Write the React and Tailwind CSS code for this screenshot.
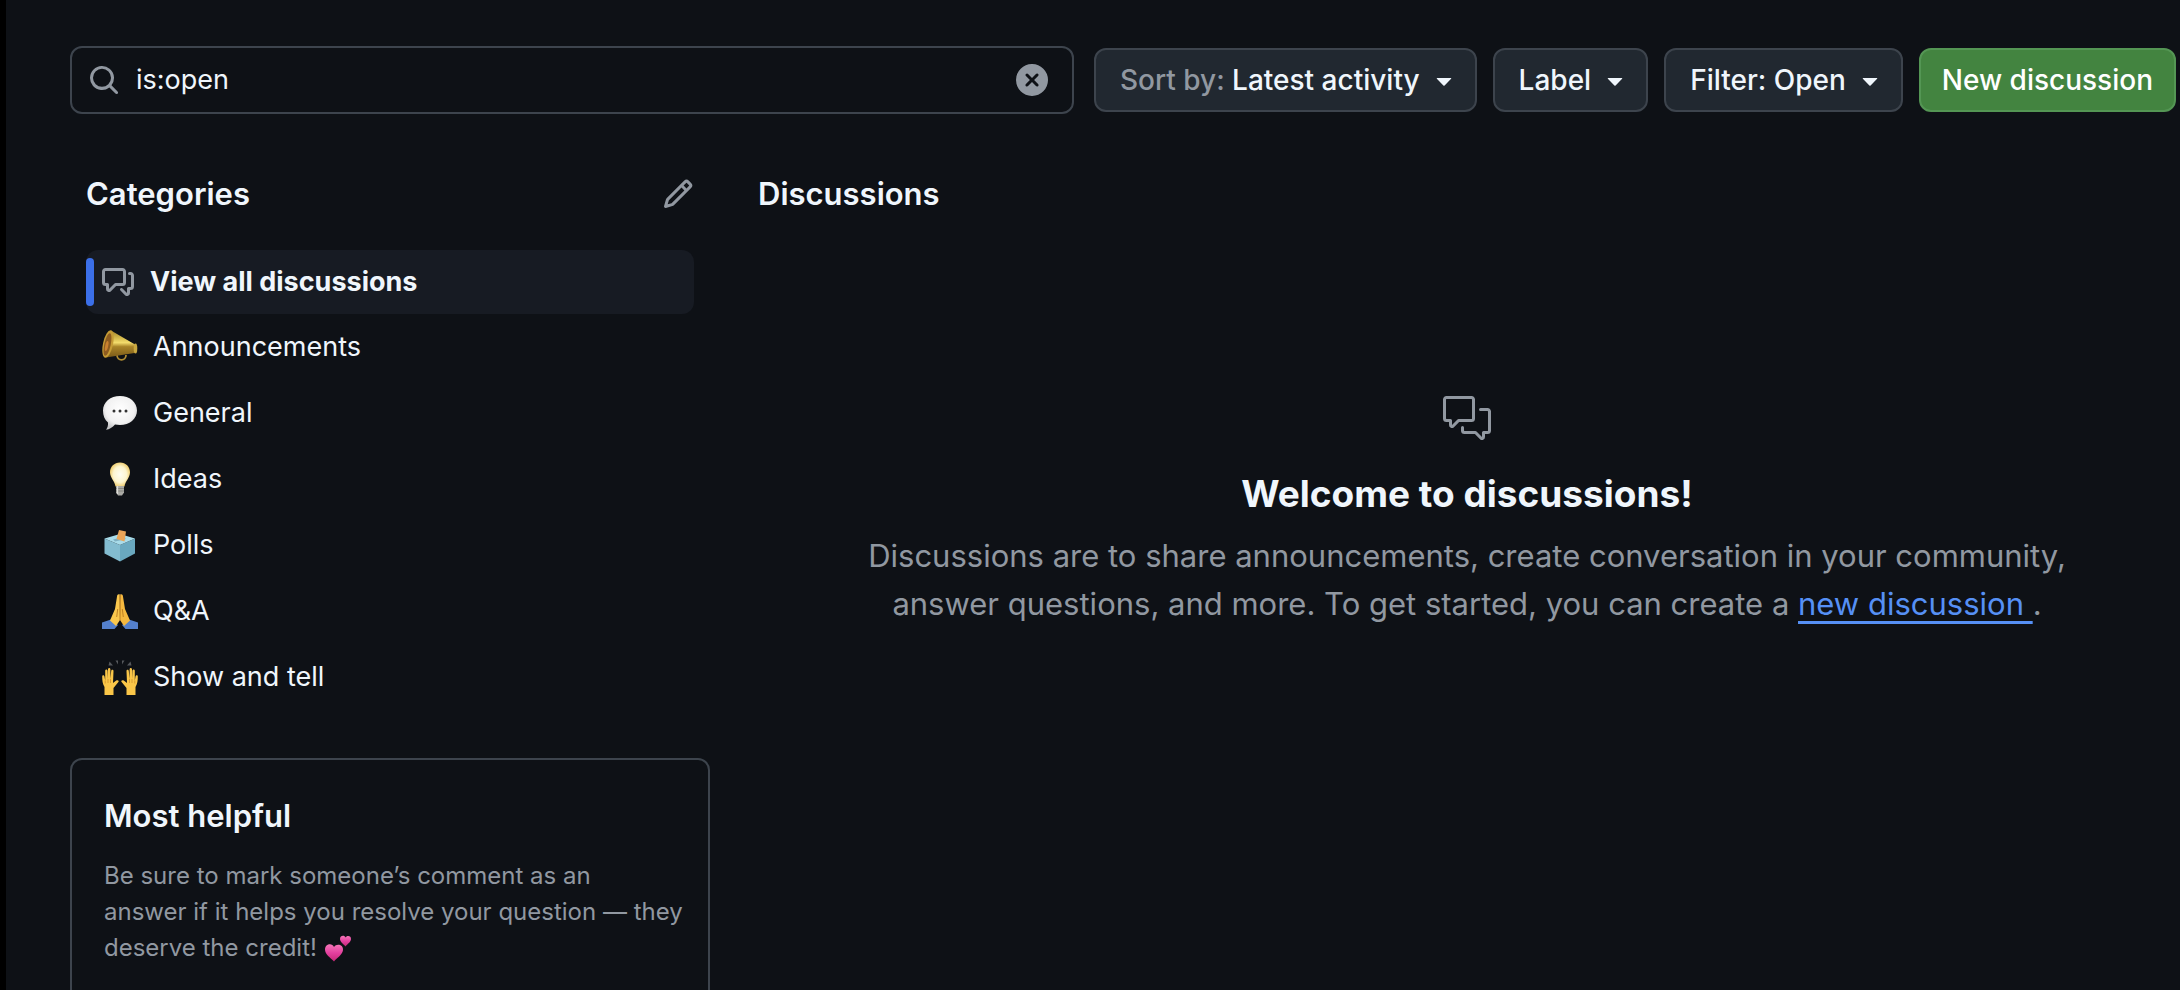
import { GoCommentDiscussion } from "react-icons/go";

const categories = [
  { name: "Announcements", Emoji: Megaphone },
  { name: "General", Emoji: Speech },
  { name: "Ideas", Emoji: Bulb },
  { name: "Polls", Emoji: Ballot },
  { name: "Q&A", Emoji: Pray },
  { name: "Show and tell", Emoji: RaisedHands },
];

const iconPaths = {
  search:
    "M10.68 11.74a6 6 0 0 1-7.922-8.982 6 6 0 0 1 8.982 7.922l3.04 3.04a.749.749 0 0 1-.326 1.275.749.749 0 0 1-.734-.215ZM11.5 7a4.499 4.499 0 1 0-8.997 0A4.499 4.499 0 0 0 11.5 7Z",
  pencil:
    "M11.013 1.427a1.75 1.75 0 0 1 2.474 0l1.086 1.086a1.75 1.75 0 0 1 0 2.474l-8.61 8.61c-.21.21-.47.364-.756.445l-3.251.93a.75.75 0 0 1-.927-.928l.929-3.25c.081-.286.235-.547.445-.758l8.61-8.61Zm.176 4.823L9.75 4.81l-6.286 6.287a.253.253 0 0 0-.064.108l-.558 1.953 1.953-.558a.253.253 0 0 0 .108-.064Zm1.238-3.763a.25.25 0 0 0-.354 0L10.811 3.75l1.439 1.44 1.263-1.263a.25.25 0 0 0 0-.354Z",
  discussion:
    "M1.75 1h8.5c.966 0 1.75.784 1.75 1.75v5.5A1.75 1.75 0 0 1 10.25 10H7.061l-2.574 2.573A1.458 1.458 0 0 1 2 11.543V10h-.25A1.75 1.75 0 0 1 0 8.25v-5.5C0 1.784.784 1 1.75 1ZM1.5 2.75v5.5c0 .138.112.25.25.25h1a.75.75 0 0 1 .75.75v2.19l2.72-2.72a.749.749 0 0 1 .53-.22h3.5a.25.25 0 0 0 .25-.25v-5.5a.25.25 0 0 0-.25-.25h-8.5a.25.25 0 0 0-.25.25Zm13 2a.25.25 0 0 0-.25-.25h-.5a.75.75 0 0 1 0-1.5h.5c.966 0 1.75.784 1.75 1.75v5.5A1.75 1.75 0 0 1 14.25 12H14v1.543a1.458 1.458 0 0 1-2.487 1.03L9.22 12.28a.749.749 0 0 1 .326-1.275.749.749 0 0 1 .734.215l2.22 2.22v-2.19a.75.75 0 0 1 .75-.75h1a.25.25 0 0 0 .25-.25Z",
  clear:
    "M2.343 13.657A8 8 0 1 1 13.658 2.343 8 8 0 0 1 2.343 13.657ZM6.03 4.97a.751.751 0 0 0-1.042.018.751.751 0 0 0-.018 1.042L6.94 8 4.97 9.97a.749.749 0 0 0 .326 1.275.749.749 0 0 0 .734-.215L8 9.06l1.97 1.97a.749.749 0 0 0 1.275-.326.749.749 0 0 0-.215-.734L9.06 8l1.97-1.97a.749.749 0 0 0-.326-1.275.749.749 0 0 0-.734.215L8 6.94Z",
  caret:
    "m4.427 7.427 3.396 3.396a.25.25 0 0 0 .354 0l3.396-3.396A.25.25 0 0 0 11.396 7H4.604a.25.25 0 0 0-.177.427Z",
};

function Icon({ name, className = "" }) {
  return (
    <svg viewBox="0 0 16 16" fill="currentColor" className={"size-8 shrink-0 " + className} aria-hidden="true">
      <path d={iconPaths[name]} />
    </svg>
  );
}

function Megaphone() {
  return (
    <svg viewBox="0 0 36 36" className="size-9 shrink-0" aria-hidden="true">
      <defs>
        <linearGradient id="mega" x1="0" y1="0" x2="0" y2="1">
          <stop offset="0" stopColor="#a5842a" />
          <stop offset=".3" stopColor="#d9bf50" />
          <stop offset=".45" stopColor="#f3dc6c" />
          <stop offset=".6" stopColor="#a98428" />
          <stop offset="1" stopColor="#7a5a18" />
        </linearGradient>
      </defs>
      <path d="M15 26c0 6.500 9 6.500 9 0" fill="none" stroke="#b08d33" strokeWidth="1.800" />
      <path d="M9 1.500 33 15.500c2.500 1.500 2 8-.500 8.500L4 28.500z" fill="url(#mega)" />
      <ellipse cx="6" cy="15" rx="5" ry="14" transform="rotate(12 6 15)" fill="#c59b35" />
      <ellipse cx="5.500" cy="15.500" rx="3.200" ry="11.500" transform="rotate(12 5.500 15.500)" fill="#8d5c20" />
      <ellipse cx="4.700" cy="17" rx="1.500" ry="5" transform="rotate(12 4.700 17)" fill="#c9812f" />
      <ellipse cx="33.500" cy="19.500" rx="1.800" ry="5" fill="#c9a840" />
    </svg>
  );
}

function Speech() {
  return (
    <svg viewBox="0 0 36 36" className="size-9 shrink-0" aria-hidden="true">
      <defs>
        <radialGradient id="speech" cx=".5" cy=".4" r=".6">
          <stop offset="0" stopColor="#fff" />
          <stop offset=".7" stopColor="#f1f1f1" />
          <stop offset="1" stopColor="#c4c4c6" />
        </radialGradient>
      </defs>
      <path d="M18 1c9.500 0 17 6 17 14.500S27.500 30 18 30c-2 0-3.500-.200-5-.500-2.500 3-5.500 4.800-9 5.300 1.500-2 2.300-4.500 2-7.300C2.700 25 1 20.500 1 15.500 1 7 8.500 1 18 1z" fill="url(#speech)" />
      <g fill="#333"><circle cx="12" cy="16" r="1.500" /><circle cx="18" cy="16" r="1.500" /><circle cx="24" cy="16" r="1.500" /></g>
    </svg>
  );
}

function Bulb() {
  return (
    <svg viewBox="0 0 36 36" className="size-9 shrink-0" aria-hidden="true">
      <defs>
        <radialGradient id="bulb" cx=".5" cy=".5" r=".55">
          <stop offset="0" stopColor="#fffef2" />
          <stop offset=".6" stopColor="#fdf5cf" />
          <stop offset="1" stopColor="#ecc65e" />
        </radialGradient>
      </defs>
      <path d="M18 1.500c5.800 0 10 4.300 10 9.800 0 5.700-4.800 8.700-5.500 14.200h-9C12.800 20 8 17 8 11.300 8 5.800 12.200 1.500 18 1.500z" fill="url(#bulb)" />
      <path d="M14 25h8v6.500L20 34.500h-4l-2-3z" fill="#a9a9a4" />
      <path d="M14 27.500h8M14 30h8" stroke="#85857f" strokeWidth="1" />
      <path d="M15.500 25v8" stroke="#dcdcd8" strokeWidth="1.300" />
    </svg>
  );
}

function Ballot() {
  return (
    <svg viewBox="0 0 36 36" className="size-9 shrink-0" aria-hidden="true">
      <path d="M2.500 11.500 18 18v16.500L2.500 26.500z" fill="#83bcd0" />
      <path d="M33 11.500 18 18v16.500l15-8z" fill="#6aa8bf" />
      <path d="M2.500 11.500 18 7l15 4.500L18 18z" fill="#a9dcea" />
      <path d="m11 12.500 11-2.500 2 2-11 2.500z" fill="#7fb0c2" />
      <path d="m17 3 7 1.500-1.500 10-8-2.500z" fill="#e9a458" />
    </svg>
  );
}

function Pray() {
  return (
    <svg viewBox="0 0 36 36" className="size-9 shrink-0" aria-hidden="true">
      <path d="M0 29.500 9 26.500l7 5.500-3.500 4H0zM36 29.500l-9-3-7 5.500 3.500 4H36z" fill="#5480cc" />
      <path d="M17.800 1.500c-1.500-.800-2.500 0-2.700 1.500L13 16 8 27.500l6 5.500 4-6z" fill="#fbc84d" />
      <path d="M18.200 1.500c1.500-.800 2.500 0 2.700 1.500L23 16l5 11.500-6 5.500-4-6z" fill="#f6b93f" />
      <path d="M18 2v26M15.700 16l-1 8M20.300 16l1 8" fill="none" stroke="#ba7b1f" strokeWidth=".900" />
    </svg>
  );
}

function Hand() {
  return (
    <>
      <path d="M2.500 36v-8C.500 25 .200 21 .200 17.500c0-1.800 2-1.800 2.300 0l.700 4V12c0-2 2.200-2 2.400 0l.400 8V10.500c0-2 2.400-2 2.400 0V20l.800-8c.200-1.800 2.400-1.600 2.300.200L11 24l3.200-2.500c1.800-1 3.400.300 2 1.800L11.500 29v7z" fill="#fac648" />
      <path d="M3.200 21.500v3M6 20v4M8.500 20v4" stroke="#c98a28" strokeWidth=".700" />
    </>
  );
}

function RaisedHands() {
  return (
    <svg viewBox="0 0 36 36" className="size-9 shrink-0" aria-hidden="true">
      <Hand />
      <g transform="matrix(-1 0 0 1 36 0)"><Hand /></g>
      <path d="m7.500 2.500 3.500 4-4.500 0zM13.500 1.500l2.500 0v4zM22.500 1.500 20 1.500v4zM28.500 2.500l-3.500 4 4.500 0z" fill="#55585c" />
    </svg>
  );
}

function Hearts() {
  return (
    <svg viewBox="0 0 28 28" className="inline-block size-7 align-text-bottom" role="img" aria-label="two hearts">
      <defs>
        <linearGradient id="hearts" x1="0" y1="0" x2="0" y2="1">
          <stop offset="0" stopColor="#f576b8" />
          <stop offset=".5" stopColor="#e4409f" />
          <stop offset="1" stopColor="#c42776" />
        </linearGradient>
      </defs>
      <path d="M10 27.500C6.500 23.500 1 20.500 1 15.500 1 10 8 8.500 10 13c2.500-4 9.500-2.500 9 3-.500 5-6 7.500-9 11.500z" fill="url(#hearts)" />
      <path d="M21.500 12.500C19.500 10 16 8 16 5c0-3.500 4.300-4.200 5.700-1.500C23.300 1 27.300 2 27 5.300c-.300 3-3.500 4.700-5.500 7.200z" fill="url(#hearts)" />
    </svg>
  );
}

function MenuButton({ children }) {
  return (
    <button type="button" className="flex h-16 shrink-0 items-center gap-2 whitespace-nowrap rounded-xl border-2 border-[#3d444d] bg-[#212830] pl-6 pr-[15px] font-medium">
      <span>{children}</span>
      <Icon name="caret" />
    </button>
  );
}

export default function App() {
  return (
    <div className="h-screen overflow-hidden border-l-6 border-black bg-[#0e1116] pl-16 pr-1 pt-[46px] font-[Inter,sans-serif] text-[27px] leading-10 text-[#f0f6fc]">
      <header className="flex items-center gap-5">
        <form role="search" className="flex h-17 min-w-0 flex-1 items-center rounded-xl border-2 border-[#3d444d] pl-4 pr-6">
          <Icon name="search" className="text-[#9198a1]" />
          <input aria-label="Search discussions" defaultValue="is:open" className="ml-4 min-w-0 flex-1 bg-transparent outline-none" />
          <button type="reset" aria-label="Clear search" className="text-[#9198a1]">
            <Icon name="clear" />
          </button>
        </form>
        <div className="flex gap-4 text-[28px]">
          <MenuButton><span className="text-[#9198a1]">Sort by:</span> Latest activity</MenuButton>
          <MenuButton>Label</MenuButton>
          <MenuButton>Filter: Open</MenuButton>
          <button type="button" className="h-16 whitespace-nowrap rounded-xl border-2 border-[#549654] bg-[#438440] px-[21px] font-medium text-white">New discussion</button>
        </div>
      </header>

      <div className="mt-[58px] flex gap-12">
        <aside className="w-160 shrink-0">
          <div className="flex items-center justify-between px-4">
            <h2 className="text-[31px] font-semibold leading-11">Categories</h2>
            <button type="button" aria-label="Edit categories" className="text-[#9198a1]"><Icon name="pencil" /></button>
          </div>
          <nav aria-label="Categories" className="mt-[34px] px-4">
            <a href="#all" aria-current="page" className="flex h-16 items-center rounded-xl bg-[#171b23] font-bold">
              <span className="h-12 w-2 rounded-full bg-[#3b6fe8]" />
              <Icon name="discussion" className="ml-2 mr-4 text-[#9198a1]" />
              View all discussions
            </a>
            <ul>
              {categories.map(({ name, Emoji }) => (
                <li key={name}>
                  <a href={"#" + name} className="flex h-[66px] items-center gap-[15px] px-4"><Emoji />{name}</a>
                </li>
              ))}
            </ul>
          </nav>
          <section className="mt-12 h-80 rounded-xl border-2 border-[#3d444d] pl-8 pr-5 pt-[34px]">
            <h2 className="text-[31px] font-semibold leading-11">Most helpful</h2>
            <p className="mt-5 text-2xl leading-9 text-[#9198a1]">
              Be sure to mark someone’s comment as an
              <br />
              answer if it helps you resolve your question — they deserve the credit! <Hearts />
            </p>
          </section>
        </aside>
        <main className="min-w-0 flex-1">
          <h2 className="text-[31px] font-semibold leading-11">Discussions</h2>
          <div className="mt-[178px] flex flex-col items-center text-center">
            <GoCommentDiscussion className="size-12 text-[#9198a1]" aria-hidden="true" />
            <h3 className="mt-6 text-[37px] font-bold leading-14">Welcome to discussions!</h3>
            <p className="mt-[10px] max-w-300 text-[31px] leading-12 text-[#9198a1]">
              Discussions are to share announcements, create conversation in your community, answer questions, and more. To get started, you can create a{" "}
              <a href="#new" className="whitespace-pre text-[#5690f5] underline decoration-3 underline-offset-6 [text-decoration-skip-ink:none]">new discussion </a>.
            </p>
          </div>
        </main>
      </div>
    </div>
  );
}
